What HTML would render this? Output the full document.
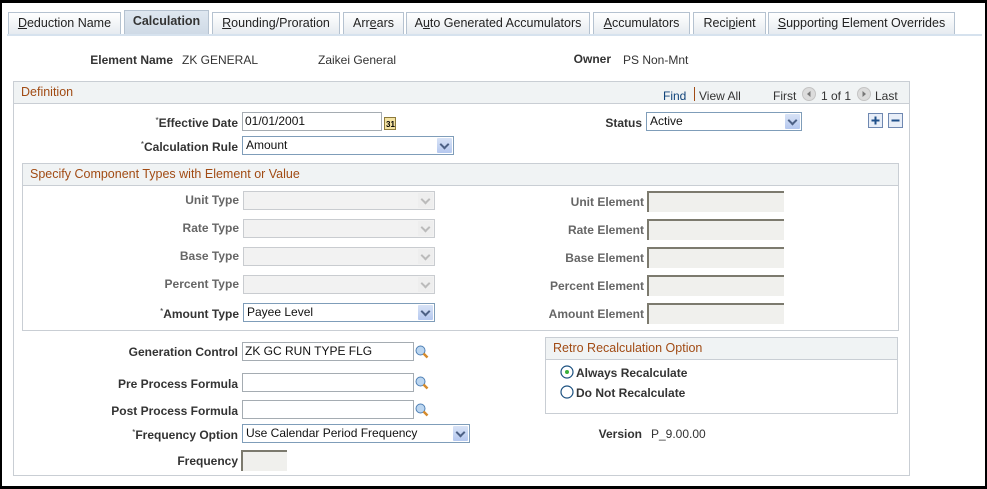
<!DOCTYPE html>
<html><head><meta charset="utf-8"><style>
*{box-sizing:border-box;margin:0;padding:0}
body{width:987px;height:489px;background:#000;position:relative;overflow:hidden;font-family:"Liberation Sans",Arial,sans-serif;font-size:12px;color:#333}
#pg{position:absolute;left:2px;top:3px;width:983px;height:483px;background:#fff}
.a{position:absolute;white-space:nowrap}
.tab{position:absolute;top:9px;height:22px;border:1px solid #b5c2d0;border-bottom:none;background:linear-gradient(#fff,#e6ebf0);font-size:12.5px;color:#222;text-align:center;line-height:21px}
.tab.on{top:7px;height:24px;background:linear-gradient(#dfe7f0,#cfdae6);font-weight:bold;color:#333}
.lb{position:absolute;font-weight:bold;color:#333;text-align:right;white-space:nowrap}
.lb.g{color:#666}
.lb sup{font-size:8px;font-weight:normal;vertical-align:4px}
.v{position:absolute;white-space:nowrap;color:#333}
.in{position:absolute;height:19px;border:1px solid #999;background:#fff;padding-left:2px;line-height:17px;color:#111}
.sel{position:absolute;height:19px;border:1px solid #7f9db9;background:#fff;padding-left:3px;line-height:17px;color:#111}
.sel i{position:absolute;right:1px;top:1px;width:15px;height:15px;background:linear-gradient(#d8e3f6,#b5c8ef);border-radius:1px}
.sel i:after{content:"";position:absolute;left:4px;top:3px;width:5px;height:5px;border-right:2px solid #4d6185;border-bottom:2px solid #4d6185;transform:rotate(45deg)}
.sel.d{border-color:#c9ccd0;background:#f2f2f2}
.sel.d i{background:#eeeeee}
.sel.d i:after{border-color:#bbb}
.ro{position:absolute;height:21px;border:2px solid #7c7a6e;border-right:none;border-bottom:none;background:#f0f0ed}
.box{position:absolute;border:1px solid #c9ced4}
.hd{position:absolute;left:0;right:0;top:0;height:22px;background:#f0f3f4;border-bottom:1px solid #c9ced4;color:#a14b14;font-size:12.5px;line-height:21px;padding-left:7px}
.lk{position:absolute;width:14px;height:14px}
</style></head><body><div id="pg">
<div class="tab" style="left:6px;width:113px"><u>D</u>eduction Name</div>
<div class="tab on" style="left:122px;width:85px">Calculation</div>
<div class="tab" style="left:210px;width:128px"><u>R</u>ounding/Proration</div>
<div class="tab" style="left:341px;width:61px">Arr<u>e</u>ars</div>
<div class="tab" style="left:404px;width:184px">A<u>u</u>to Generated Accumulators</div>
<div class="tab" style="left:591px;width:97px"><u>A</u>ccumulators</div>
<div class="tab" style="left:691px;width:73px">Reci<u>p</u>ient</div>
<div class="tab" style="left:766px;width:187px"><u>S</u>upporting Element Overrides</div>
<div class="a" style="left:5px;top:31px;width:975px;height:2px;background:#d6e2ee"></div>

<div class="lb" style="left:60px;width:111px;top:50px">Element Name</div>
<div class="v" style="left:180px;top:50px">ZK GENERAL</div>
<div class="v" style="left:316px;top:50px">Zaikei General</div>
<div class="lb" style="left:540px;width:69px;top:49px">Owner</div>
<div class="v" style="left:621px;top:50px">PS Non-Mnt</div>

<div class="box" style="left:11px;top:78px;width:897px;height:395px">
 <div class="hd">Definition</div>
</div>
<div class="a" style="left:661px;top:86px;color:#10437a">Find</div>
<div class="a" style="left:692px;top:84px;width:1px;height:14px;background:#a14b14"></div>
<div class="a" style="left:697px;top:86px">View All</div>
<div class="a" style="left:771px;top:86px">First</div>
<svg class="a" style="left:800px;top:84px" width="14" height="14"><circle cx="7" cy="7" r="6.5" fill="#dcdcdc" stroke="#c4c4c4"/><path d="M8.5 4v6L5 7z" fill="#777"/></svg>
<div class="a" style="left:819px;top:86px">1 of 1</div>
<svg class="a" style="left:855px;top:84px" width="14" height="14"><circle cx="7" cy="7" r="6.5" fill="#dcdcdc" stroke="#c4c4c4"/><path d="M5.5 4v6L9 7z" fill="#777"/></svg>
<div class="a" style="left:873px;top:86px">Last</div>

<div class="lb" style="left:120px;width:116px;top:113px"><sup>*</sup>Effective Date</div>
<div class="in" style="left:240px;top:109px;width:140px;border-color:#a5acb2">01/01/2001</div>
<svg class="a" style="left:382px;top:113px" width="13" height="15"><rect x="0.5" y="1.5" width="11" height="12" fill="#f4e3a3" stroke="#8d7a3a"/><text x="2" y="11" font-size="8" font-family="Liberation Sans" font-weight="bold" fill="#000">31</text></svg>
<div class="lb" style="left:560px;width:80px;top:113px">Status</div>
<div class="sel" style="left:644px;top:109px;width:156px">Active<i></i></div>
<svg class="a" style="left:866px;top:110px" width="38" height="15"><rect x="0.5" y="0.5" width="14" height="14" fill="#e8eef8" stroke="#6f88b1"/><path d="M3.5 7.5h8M7.5 3.5v8" stroke="#20508a" stroke-width="2"/><rect x="20.5" y="0.5" width="14" height="14" fill="#e8eef8" stroke="#6f88b1"/><path d="M23.5 7.5h8" stroke="#20508a" stroke-width="2"/></svg>

<div class="lb" style="left:100px;width:136px;top:137px"><sup>*</sup>Calculation Rule</div>
<div class="sel" style="left:240px;top:133px;width:212px">Amount<i></i></div>

<div class="box" style="left:20px;top:160px;width:877px;height:168px">
 <div class="hd">Specify Component Types with Element or Value</div>
</div>
<div class="lb g" style="left:130px;width:107px;top:190px">Unit Type</div>
<div class="lb g" style="left:130px;width:107px;top:218px">Rate Type</div>
<div class="lb g" style="left:130px;width:107px;top:246px">Base Type</div>
<div class="lb g" style="left:130px;width:107px;top:274px">Percent Type</div>
<div class="lb" style="left:130px;width:107px;top:304px"><sup>*</sup>Amount Type</div>
<div class="sel d" style="left:241px;top:188px;width:192px"><i></i></div>
<div class="sel d" style="left:241px;top:216px;width:192px"><i></i></div>
<div class="sel d" style="left:241px;top:244px;width:192px"><i></i></div>
<div class="sel d" style="left:241px;top:272px;width:192px"><i></i></div>
<div class="sel" style="left:241px;top:300px;width:192px">Payee Level<i></i></div>

<div class="lb g" style="left:520px;width:122px;top:192px">Unit Element</div>
<div class="lb g" style="left:520px;width:122px;top:220px">Rate Element</div>
<div class="lb g" style="left:520px;width:122px;top:248px">Base Element</div>
<div class="lb g" style="left:520px;width:122px;top:276px">Percent Element</div>
<div class="lb g" style="left:520px;width:122px;top:304px">Amount Element</div>
<div class="ro" style="left:645px;top:188px;width:137px"></div>
<div class="ro" style="left:645px;top:216px;width:137px"></div>
<div class="ro" style="left:645px;top:244px;width:137px"></div>
<div class="ro" style="left:645px;top:272px;width:137px"></div>
<div class="ro" style="left:645px;top:300px;width:137px"></div>

<div class="lb" style="left:90px;width:146px;top:342px">Generation Control</div>
<div class="in" style="left:240px;top:339px;width:172px;border-color:#a5acb2">ZK GC RUN TYPE FLG</div>
<div class="lb" style="left:90px;width:146px;top:374px">Pre Process Formula</div>
<div class="in" style="left:240px;top:370px;width:172px;border-color:#a5acb2"></div>
<div class="lb" style="left:90px;width:146px;top:401px">Post Process Formula</div>
<div class="in" style="left:240px;top:397px;width:172px;border-color:#a5acb2"></div>
<svg class="lk" style="left:413px;top:342px" viewBox="0 0 14 14"><circle cx="5.5" cy="5.5" r="4.5" fill="#bcd6f0" stroke="#4e7fb4"/><path d="M8.5 8.5l4 4" stroke="#d58a2c" stroke-width="2.5"/></svg>
<svg class="lk" style="left:413px;top:373px" viewBox="0 0 14 14"><circle cx="5.5" cy="5.5" r="4.5" fill="#bcd6f0" stroke="#4e7fb4"/><path d="M8.5 8.5l4 4" stroke="#d58a2c" stroke-width="2.5"/></svg>
<svg class="lk" style="left:413px;top:400px" viewBox="0 0 14 14"><circle cx="5.5" cy="5.5" r="4.5" fill="#bcd6f0" stroke="#4e7fb4"/><path d="M8.5 8.5l4 4" stroke="#d58a2c" stroke-width="2.5"/></svg>
<div class="lb" style="left:90px;width:146px;top:425px"><sup>*</sup>Frequency Option</div>
<div class="sel" style="left:240px;top:421px;width:228px">Use Calendar Period Frequency<i></i></div>
<div class="lb" style="left:90px;width:146px;top:451px">Frequency</div>
<div class="ro" style="left:239px;top:447px;width:46px"></div>

<div class="box" style="left:543px;top:334px;width:353px;height:77px">
 <div class="hd">Retro Recalculation Option</div>
</div>
<svg class="a" style="left:558px;top:362px" width="14" height="14"><circle cx="7" cy="7" r="6" fill="#fff" stroke="#1c5180" stroke-width="1.2"/><circle cx="7" cy="7" r="2" fill="#3ab03a"/></svg>
<div class="lb" style="left:574px;top:363px">Always Recalculate</div>
<svg class="a" style="left:558px;top:382px" width="14" height="14"><circle cx="7" cy="7" r="6" fill="#fff" stroke="#1c5180" stroke-width="1.2"/></svg>
<div class="lb" style="left:574px;top:383px">Do Not Recalculate</div>

<div class="lb" style="left:580px;width:60px;top:424px">Version</div>
<div class="v" style="left:649px;top:424px">P_9.00.00</div>
</div></body></html>
